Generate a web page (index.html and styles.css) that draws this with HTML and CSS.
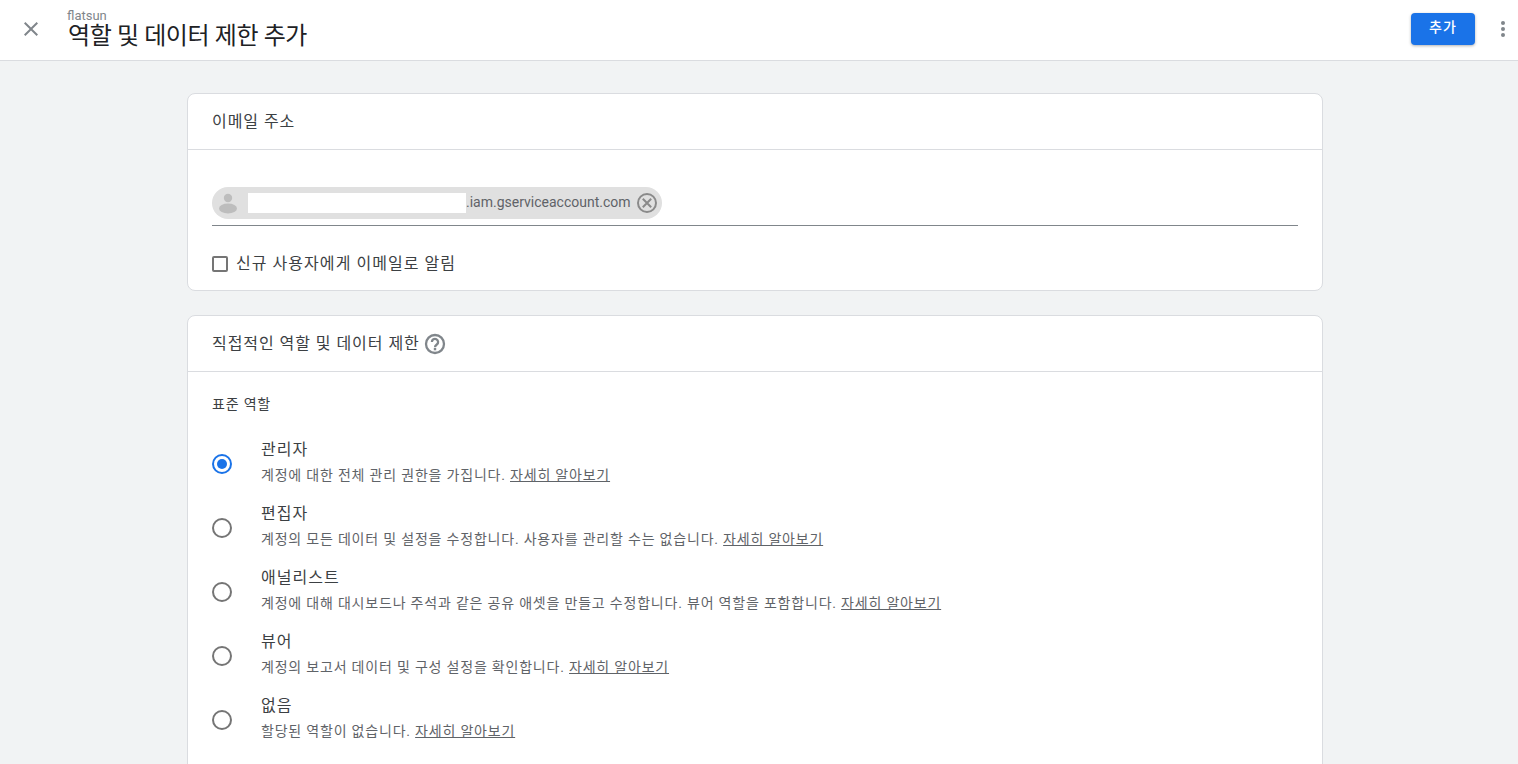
FILE: index.html
```html
<!DOCTYPE html>
<html lang="ko">
<head>
<meta charset="utf-8">
<title>역할 및 데이터 제한 추가</title>
<link rel="stylesheet" href="styles.css">
</head>
<body>
<header class="topbar">
  <button class="close" aria-label="닫기">
    <svg viewBox="0 0 24 24" width="24" height="24"><path d="M19 6.41 17.59 5 12 10.59 6.41 5 5 6.41 10.59 12 5 17.59 6.41 19 12 13.41 17.59 19 19 17.59 13.41 12z"/></svg>
  </button>
  <div class="titles">
    <div class="account">flatsun</div>
    <h1 class="title">역할 및 데이터 제한 추가</h1>
  </div>
  <button class="add"><span class="add-label">추가</span></button>
  <button class="more" aria-label="더보기">
    <svg viewBox="0 0 6 20" width="6" height="20"><circle cx="3" cy="4" r="2"/><circle cx="3" cy="10" r="2"/><circle cx="3" cy="16" r="2"/></svg>
  </button>
</header>
<div class="scroller">
<main class="content">
  <section class="card">
    <h2 class="card-head"><span class="head-label">이메일 주소</span></h2>
    <div class="email-body">
      <div class="email-field">
        <div class="chip">
          <svg class="avatar" viewBox="0 0 20 24" width="20" height="24"><circle cx="10" cy="7" r="4.2"/><ellipse cx="10" cy="17.5" rx="9" ry="5"/></svg>
          <span class="redact"></span>
          <span class="chip-text">.iam.gserviceaccount.com</span>
          <svg class="chip-x" viewBox="0 0 22 22" width="22" height="22"><circle cx="11" cy="11" r="9"/><path d="M6.8 6.8l8.4 8.4M15.2 6.8l-8.4 8.4"/></svg>
        </div>
      </div>
      <label class="check-row"><span class="checkbox"></span><span class="check-label">신규 사용자에게 이메일로 알림</span></label>
    </div>
  </section>
  <section class="card">
    <h2 class="card-head"><span class="head-label">직접적인 역할 및 데이터 제한</span>
      <svg class="help" viewBox="0 0 24 24" width="24" height="24"><circle class="help-ring" cx="12" cy="12" r="9"/><path class="help-q" d="M8.9 10a3.1 3.1 0 1 1 4.9 2.5c-1.2.9-1.8 1.4-1.8 2.8"/><rect class="help-dot" x="10.8" y="16" width="2.4" height="2.3"/></svg>
    </h2>
    <div class="roles">
      <div class="roles-label">표준 역할</div>
      <div class="role">
        <span class="radio on"></span>
        <div class="role-text"><div class="role-name">관리자</div><div class="role-desc">계정에 대한 전체 관리 권한을 가집니다. <a href="#">자세히 알아보기</a></div></div>
      </div>
      <div class="role">
        <span class="radio"></span>
        <div class="role-text"><div class="role-name">편집자</div><div class="role-desc">계정의 모든 데이터 및 설정을 수정합니다. 사용자를 관리할 수는 없습니다. <a href="#">자세히 알아보기</a></div></div>
      </div>
      <div class="role">
        <span class="radio"></span>
        <div class="role-text"><div class="role-name">애널리스트</div><div class="role-desc">계정에 대해 대시보드나 주석과 같은 공유 애셋을 만들고 수정합니다. 뷰어 역할을 포함합니다. <a href="#">자세히 알아보기</a></div></div>
      </div>
      <div class="role">
        <span class="radio"></span>
        <div class="role-text"><div class="role-name">뷰어</div><div class="role-desc">계정의 보고서 데이터 및 구성 설정을 확인합니다. <a href="#">자세히 알아보기</a></div></div>
      </div>
      <div class="role">
        <span class="radio"></span>
        <div class="role-text"><div class="role-name">없음</div><div class="role-desc">할당된 역할이 없습니다. <a href="#">자세히 알아보기</a></div></div>
      </div>
    </div>
  </section>
</main>
</div>
</body>
</html>
```
FILE: styles.css
```css
* { box-sizing: border-box; }
html, body { height: 100%; }
body {
  margin: 0;
  overflow: hidden;
  display: flex;
  flex-direction: column;
  background: #f1f3f4;
  color: #202124;
  font-family: Roboto, "Noto Sans CJK KR", sans-serif;
}
button { border: 0; background: none; padding: 0; font-family: inherit; }
.topbar {
  height: 61px;
  flex: none;
  display: flex;
  align-items: center;
  background: #fff;
  border-bottom: 1px solid #dadce0;
}
.close { width: 24px; height: 24px; margin: -2px 0 0 19px; }
.close svg { fill: #80868b; display: block; }
.titles { margin-left: 25px; flex: 1; margin-top: -1px; }
.account { font-size: 13px; line-height: 13px; margin-left: -1px; color: #80868b; }
.title { margin: 0; font-size: 24px; line-height: 29px; font-weight: 400; color: #202124; letter-spacing: -.4px; }
.add {
  width: 64px; height: 32px; margin-top: -3px;
  display: flex; align-items: flex-start; justify-content: center;
  background: #1a73e8; color: #fff; border-radius: 4px;
  font-size: 14px; font-weight: 500; letter-spacing: 1px;
  box-shadow: 0 1px 3px rgba(60,64,67,.4);
}
.add-label { line-height: 28px; }
.more { width: 6px; height: 20px; margin: -3px 12px 0 25px; }
.more svg { fill: #80868b; display: block; }
.scroller { flex: 1; min-height: 0; overflow: hidden; }
.content { width: 1136px; margin: 32px 0 0 187px; }
.card {
  background: #fff;
  border: 1px solid #dadce0;
  border-radius: 8px;
  margin-bottom: 24px;
}
.card-head {
  margin: 0;
  height: 56px;
  padding: 0 24px 4px;
  display: flex;
  align-items: center;
  gap: 3px;
  font-size: 16px;
  font-weight: 400;
  letter-spacing: .95px;
  color: #3c4043;
  border-bottom: 1px solid #dadce0;
}
.help { fill: #80868b; margin-top: 4px; }
.help-ring, .help-q { fill: none; stroke: #80868b; stroke-width: 2.3; }
.email-body { padding: 37px 24px 0; height: 140px; }
.email-field { height: 39px; border-bottom: 1px solid #80868b; }
.chip {
  width: 450px; height: 32px;
  display: flex; align-items: center;
  background: #e0e0e0; border-radius: 16px;
  padding-left: 6px;
}
.avatar { fill: #bdbdbd; flex: none; }
.redact { width: 218px; height: 20px; margin-left: 10px; background: #fff; flex: none; }
.chip-text { font-size: 14px; line-height: 18px; padding-bottom: 2px; color: #5f6368; }
.chip-x { margin-left: 5px; fill: none; stroke: #8a8a8a; stroke-width: 2; flex: none; }
.check-row {
  display: flex; align-items: center; gap: 8px;
  margin-top: 26px; height: 24px;
  font-size: 16px; letter-spacing: 1.05px; color: #3c4043;
}
.check-label { line-height: 24px; }
.checkbox { width: 16px; height: 16px; border: 2px solid #757575; border-radius: 2px; flex: none; }
.roles { padding: 22px 24px 60px; }
.roles-label { font-size: 14px; line-height: 20px; letter-spacing: .8px; color: #3c4043; margin-bottom: 18px; }
.role { height: 64px; display: flex; align-items: center; }
.radio {
  width: 20px; height: 20px; border: 2px solid #757575; border-radius: 50%;
  flex: none; display: flex; align-items: center; justify-content: center;
  margin-right: 29px;
}
.radio.on { border-color: #1a73e8; }
.radio.on::after { content: ""; width: 10px; height: 10px; border-radius: 50%; background: #1a73e8; }
.role-text { margin-top: -3px; }
.role-name { font-size: 16px; line-height: 20px; margin-bottom: 5px; letter-spacing: 1px; color: #3c4043; }
.role-desc { font-size: 14px; line-height: 20px; letter-spacing: .8px; color: #5f6368; }
.role-desc a { color: #5f6368; text-decoration: underline; }
```
